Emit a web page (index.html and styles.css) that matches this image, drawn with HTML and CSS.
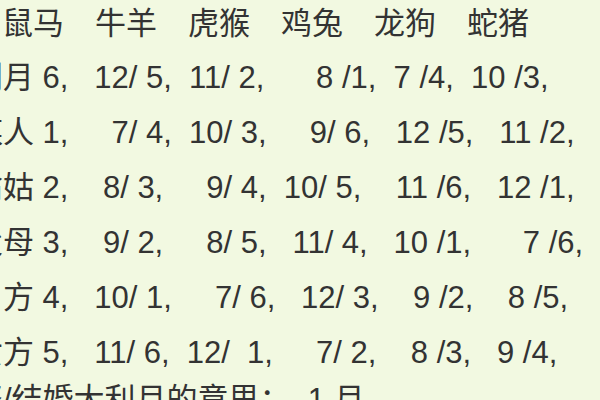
FILE: index.html
```html
<!DOCTYPE html>
<html lang="zh-CN">
<head>
<meta charset="utf-8">
<title>嫁娶月表</title>
<link rel="stylesheet" href="styles.css">
</head>
<body>
<div class="sheet">
  <div class="line head">鼠马　牛羊　虎猴　鸡兔　龙狗　蛇猪</div>
  <div class="line data"><span class="lab">大利月</span> 6,   12/ 5,  11/ 2,      8 /1,  7 /4,  10 /3,</div>
  <div class="line data"><span class="lab">妨媒人</span> 1,     7/ 4,  10/ 3,     9/ 6,   12 /5,   11 /2,</div>
  <div class="line data"><span class="lab">妨翁姑</span> 2,    8/ 3,     9/ 4,  10/ 5,    11 /6,   12 /1,</div>
  <div class="line data"><span class="lab">妨父母</span> 3,    9/ 2,     8/ 5,   11/ 4,   10 /1,      7 /6,</div>
  <div class="line data"><span class="lab">妨男方</span> 4,   10/ 1,     7/ 6,   12/ 3,    9 /2,    8 /5,</div>
  <div class="line data"><span class="lab">妨女方</span> 5,   11/ 6,  12/  1,     7/ 2,    8 /3,   9 /4,</div>
  <div class="line data last">嫁娶/结婚大利月的意思：  1 月</div>
</div>
</body>
</html>
```

FILE: styles.css
```css
html, body {
  margin: 0;
  padding: 0;
  background: #f2f9e1;
  overflow: hidden;
}
body {
  width: 600px;
  height: 400px;
}
.sheet {
  padding: 0 0 0 2px;
  margin-top: -3px;
  color: #333333;
  font-family: "Liberation Sans", "Noto Sans CJK SC", sans-serif;
  font-size: 31px;
}
.line {
  white-space: pre;
  line-height: 55px;
}
.head {
  line-height: 53px;
}
.data {
  margin-left: -61px;
}
.last {
  margin-top: -8px;
}
.lab {
  font-family: "Noto Sans CJK SC", sans-serif;
  line-height: 31px;
}
```
